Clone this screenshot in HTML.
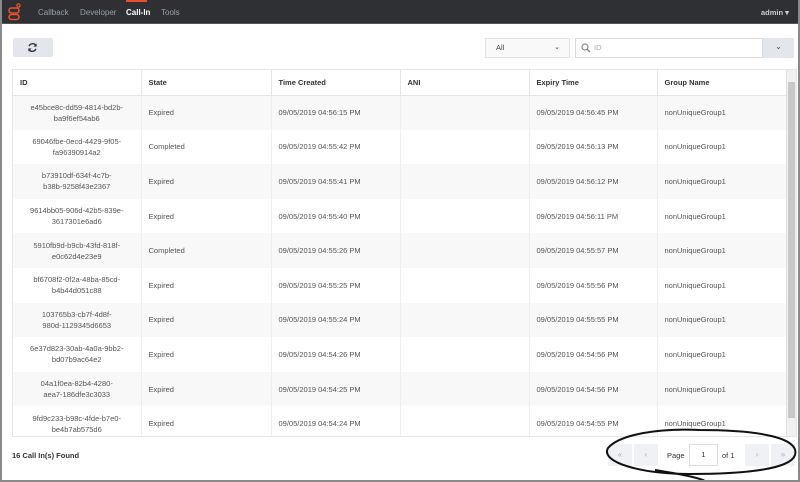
<!DOCTYPE html>
<html><head><style>
*{box-sizing:border-box;margin:0;padding:0}
body{width:800px;height:482px;overflow:hidden;background:#fff;font-family:"Liberation Sans",sans-serif;color:#444;position:relative}
.frame{position:absolute;left:0;top:0;width:800px;height:482px;border-left:2px solid #8a8a8a;border-bottom:2px solid #8a8a8a;border-right:2px solid #8a8a8a}
.top{position:absolute;left:0;top:0;width:800px;height:24px;background:#2e3033;border-bottom:1px solid #555}
.nav{position:absolute;top:8px;font-size:8px;color:#9aa0a6}
.tbl{position:absolute;left:12px;top:69px;width:785px;height:368px;border:1px solid #e6e6e6;overflow:hidden}
table{border-collapse:collapse;width:775px;font-size:7.5px;color:#555}
th{height:25px;text-align:left;padding-left:7px;font-weight:bold;color:#333;border-right:1px solid #e6e6e6;border-bottom:1px solid #e6e6e6}
td{height:34.6px;padding-left:7px;border-right:1px solid #eee;line-height:11px}
td.id{text-align:center;padding:0 4px}
tr.g td{background:#f8f8f8}
.pg{position:absolute;top:444px;height:22px;background:#eff1f4;color:#aab;font-size:8px;text-align:center;line-height:22px;width:24px}
</style></head><body>
<div class="top">
<svg style="position:absolute;left:8px;top:3px" width="14" height="18" viewBox="0 0 14 18"><circle cx="10.5" cy="2.5" r="1.6" fill="none" stroke="#e8502e" stroke-width="1.3"/><rect x="1" y="5" width="10" height="5" rx="2.5" fill="none" stroke="#e8502e" stroke-width="1.6"/><rect x="1" y="11.5" width="10" height="5" rx="2.5" fill="none" stroke="#e8502e" stroke-width="1.6"/></svg>
<span class="nav" style="left:38px">Callback</span>
<span class="nav" style="left:80px">Developer</span>
<span class="nav" style="left:126px;color:#fff;font-weight:bold">Call-In</span>
<div style="position:absolute;left:126px;top:0;width:21px;height:2px;background:#e8502e"></div>
<span class="nav" style="left:161px">Tools</span>
<span class="nav" style="left:761px;color:#ccc;font-weight:bold;font-size:7.5px">admin ▾</span>
</div>
<div style="position:absolute;left:13px;top:38px;width:40px;height:19px;background:#e3e7ed;border-radius:2px"><svg style="position:absolute;left:14px;top:4px" width="11" height="11" viewBox="0 0 12 12"><path d="M10 4A4.3 4.3 0 0 0 2.3 4.5M2 8A4.3 4.3 0 0 0 9.7 7.5" fill="none" stroke="#333" stroke-width="1.6"/><path d="M10.5 1.5V5H7" fill="#333"/><path d="M1.5 10.5V7H5" fill="#333"/></svg></div>
<div style="position:absolute;left:485px;top:38px;width:85px;height:20px;border:1px solid #e3e3e3;background:#f9f9f9;font-size:7.5px;line-height:18px;padding-left:10px">All<span style="position:absolute;right:9px;font-size:7px">⌄</span></div>
<div style="position:absolute;left:575px;top:38px;width:188px;height:20px;border:1px solid #d6d9dd;background:#fff;font-size:7.5px;line-height:18px;padding-left:18px;color:#aaa">ID<svg style="position:absolute;left:5px;top:4px" width="10" height="10"><circle cx="4" cy="4" r="3" fill="none" stroke="#888" stroke-width="1.2"/><path d="M6 6l3 3" stroke="#888" stroke-width="1.5"/></svg></div>
<div style="position:absolute;left:763px;top:38px;width:31px;height:20px;background:#e3e7ed;font-size:8px;text-align:center;line-height:18px">⌄</div>
<div class="tbl">
<table>
<tr><th style="width:128px">ID</th><th style="width:130px">State</th><th style="width:129px">Time Created</th><th style="width:129px">ANI</th><th style="width:128px">Expiry Time</th><th>Group Name</th></tr>
<tr class="g"><td class="id">e45bce8c-dd59-4814-bd2b-<br>ba9f6ef54ab6</td><td>Expired</td><td>09/05/2019 04:56:15 PM</td><td></td><td>09/05/2019 04:56:45 PM</td><td>nonUniqueGroup1</td></tr>
<tr><td class="id">69046fbe-0ecd-4429-9f05-<br>fa96390914a2</td><td>Completed</td><td>09/05/2019 04:55:42 PM</td><td></td><td>09/05/2019 04:56:13 PM</td><td>nonUniqueGroup1</td></tr>
<tr class="g"><td class="id">b73910df-634f-4c7b-<br>b38b-9258f43e2367</td><td>Expired</td><td>09/05/2019 04:55:41 PM</td><td></td><td>09/05/2019 04:56:12 PM</td><td>nonUniqueGroup1</td></tr>
<tr><td class="id">9614bb05-906d-42b5-839e-<br>3617301e6ad6</td><td>Expired</td><td>09/05/2019 04:55:40 PM</td><td></td><td>09/05/2019 04:56:11 PM</td><td>nonUniqueGroup1</td></tr>
<tr class="g"><td class="id">5910fb9d-b9cb-43fd-818f-<br>e0c62d4e23e9</td><td>Completed</td><td>09/05/2019 04:55:26 PM</td><td></td><td>09/05/2019 04:55:57 PM</td><td>nonUniqueGroup1</td></tr>
<tr><td class="id">bf6708f2-0f2a-48ba-85cd-<br>b4b44d051c88</td><td>Expired</td><td>09/05/2019 04:55:25 PM</td><td></td><td>09/05/2019 04:55:56 PM</td><td>nonUniqueGroup1</td></tr>
<tr class="g"><td class="id">103765b3-cb7f-4d8f-<br>980d-1129345d6653</td><td>Expired</td><td>09/05/2019 04:55:24 PM</td><td></td><td>09/05/2019 04:55:55 PM</td><td>nonUniqueGroup1</td></tr>
<tr><td class="id">6e37d823-30ab-4a0a-9bb2-<br>bd07b9ac64e2</td><td>Expired</td><td>09/05/2019 04:54:26 PM</td><td></td><td>09/05/2019 04:54:56 PM</td><td>nonUniqueGroup1</td></tr>
<tr class="g"><td class="id">04a1f0ea-82b4-4280-<br>aea7-186dfe3c3033</td><td>Expired</td><td>09/05/2019 04:54:25 PM</td><td></td><td>09/05/2019 04:54:56 PM</td><td>nonUniqueGroup1</td></tr>
<tr><td class="id">9fd9c233-b98c-4fde-b7e0-<br>be4b7ab575d6</td><td>Expired</td><td>09/05/2019 04:54:24 PM</td><td></td><td>09/05/2019 04:54:55 PM</td><td>nonUniqueGroup1</td></tr>
</table>
<div style="position:absolute;right:0;top:0;width:10px;height:368px;background:#f0f0f0;border-left:1px solid #e0e0e0"><div style="position:absolute;left:1px;top:12px;width:7px;height:336px;background:#c8c8c8"></div></div>
</div>
<div style="position:absolute;left:12px;top:451px;font-size:7.5px;font-weight:bold;color:#333">16 Call In(s) Found</div>
<div class="pg" style="left:608px">«</div>
<div class="pg" style="left:634px">‹</div>
<div style="position:absolute;left:667px;top:451px;font-size:7.5px;color:#333">Page</div>
<div style="position:absolute;left:689px;top:444px;width:29px;height:22px;border:1px solid #ddd;font-size:7.5px;text-align:center;line-height:20px;color:#333">1</div>
<div style="position:absolute;left:722px;top:451px;font-size:7.5px;color:#333">of 1</div>
<div class="pg" style="left:745px">›</div>
<div class="pg" style="left:771px">»</div>
<svg style="position:absolute;left:0;top:0" width="800" height="482"><path d="M700 430C660 428 620 434 608 448C600 462 640 474 690 474C740 474 790 470 795 455C800 438 760 430 700 430" fill="none" stroke="#111" stroke-width="2"/><path d="M655 470C680 474 700 478 705 481" fill="none" stroke="#111" stroke-width="2"/></svg>
<div class="frame"></div>
</body></html>
